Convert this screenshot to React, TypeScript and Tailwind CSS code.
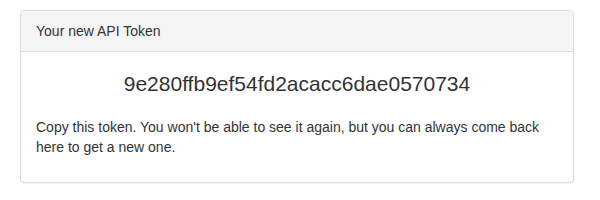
export default function App() {
  return (
    <div className="min-h-[200px] bg-white pt-[10px] font-['Liberation_Sans',Arial,sans-serif] text-[14px] leading-[20px] text-[#333]">
      <div className="ml-[20px] w-[554px] rounded-[4px] border border-[#ddd] bg-white shadow-[0_1px_1px_rgba(0,0,0,0.05)]">
        <div className="rounded-t-[3px] border-b border-[#ddd] bg-[#f5f5f5] px-[15px] py-[10px]">
          Your new API Token
        </div>
        <div className="p-[15px]">
          <div className="mt-[2px] mb-[18px] text-center text-[21px] leading-[30px]">
            9e280ffb9ef54fd2acacc6dae0570734
          </div>
          <p className="mb-[10px]">
            Copy this token. You won't be able to see it again, but you can always come back here to get a new one.
          </p>
        </div>
      </div>
    </div>
  );
}
